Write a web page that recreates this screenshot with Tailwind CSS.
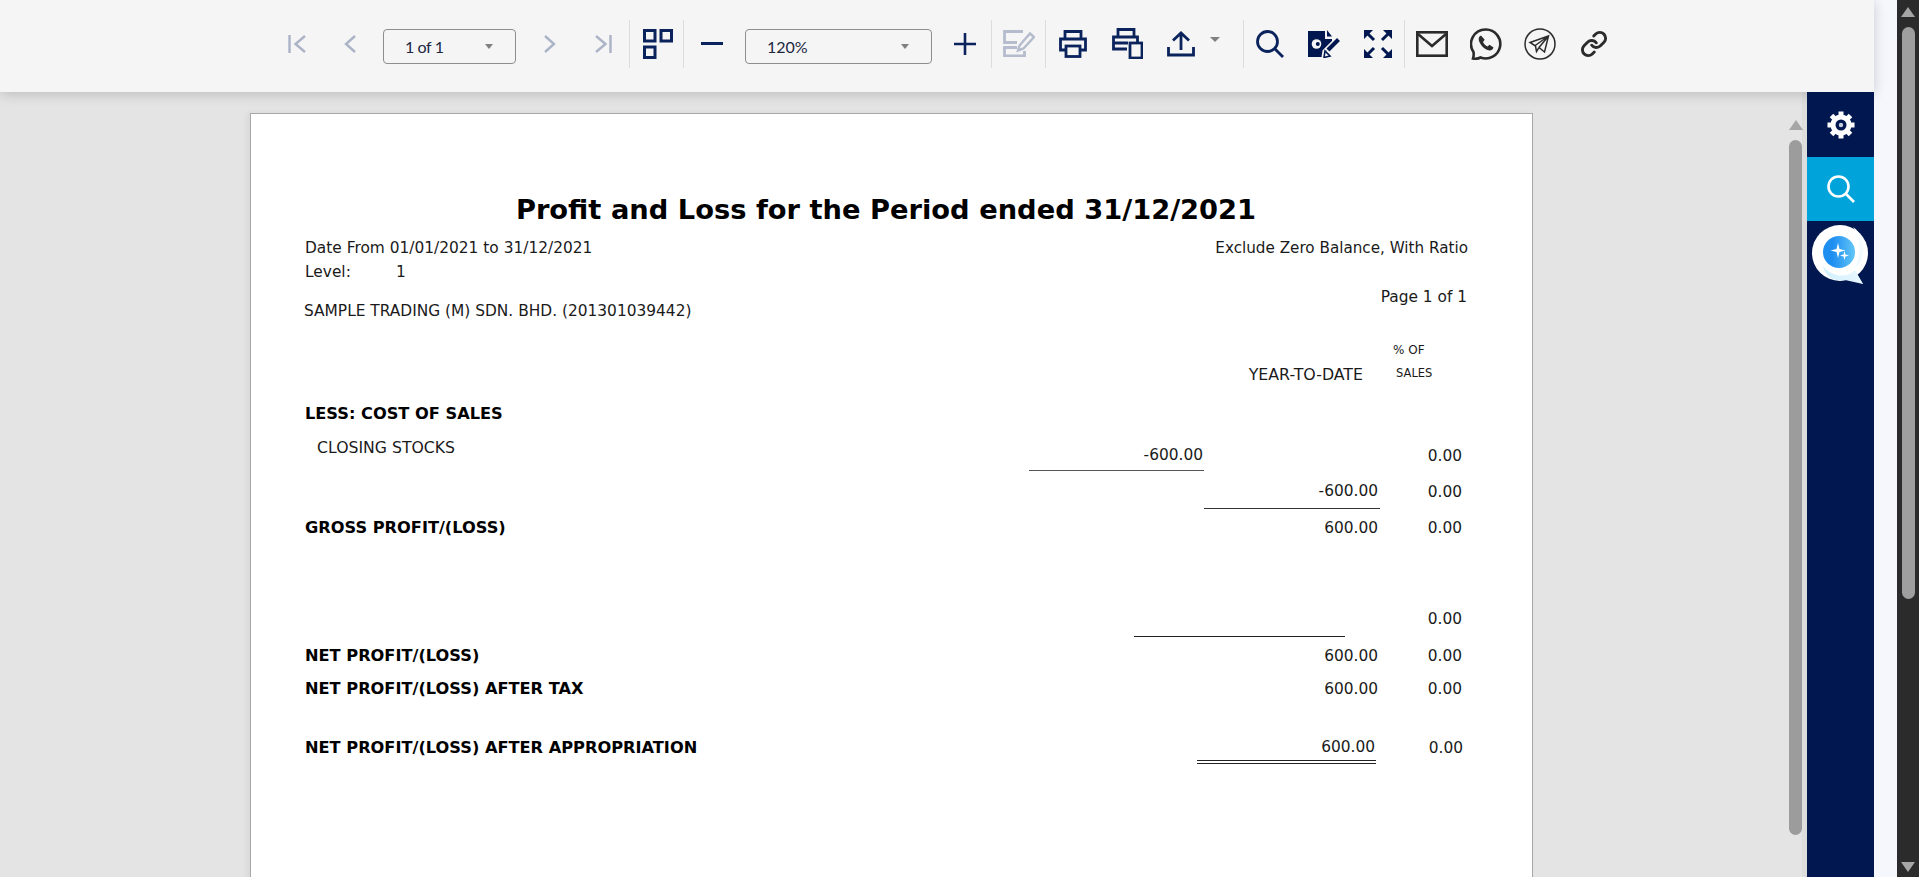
<!DOCTYPE html>
<html>
<head>
<meta charset="utf-8">
<script src="https://cdn.jsdelivr.net/npm/@tailwindcss/browser@4"></script>
<title>Profit and Loss</title>
</head>
<body class="m-0 overflow-hidden">
<div class="flex h-[877px] w-[1919px] overflow-hidden bg-[#f5f7fc]">
  <div class="flex h-full w-[1874px] flex-col">
    <!-- toolbar -->
    <div class="relative z-10 flex h-[92px] shrink-0 items-center bg-[#f5f5f5] pb-[5px] pl-[288px] shadow-[0_2px_12px_rgba(0,0,0,0.18)] font-['Lato',sans-serif]">
      <svg class="shrink-0" width="18" height="20" viewBox="0 0 18 20" fill="none" stroke="#abb3c7" stroke-width="2.4"><path d="M1.5 1v18M17 2L7.5 10l9.500 8"/></svg>
      <svg class="ml-[38px] shrink-0" width="12" height="20" viewBox="0 0 12 20" fill="none" stroke="#abb3c7" stroke-width="2.400"><path d="M11 2L2 10l9 8"/></svg>
      <div class="relative ml-[27px] mt-[5px] h-[35px] w-[133px] shrink-0 rounded-[4px] border border-[#8e8e8e] pl-[21px] pt-[4px] text-[16px] leading-[26px] tracking-[-0.4px] text-[#1c2740]">1 of 1<span class="absolute left-[101px] top-[14px] h-0 w-0 border-x-[4.500px] border-t-[5px] border-x-transparent border-t-[#808080]"></span></div>
      <svg class="ml-[28px] shrink-0" width="12" height="20" viewBox="0 0 12 20" fill="none" stroke="#abb3c7" stroke-width="2.400"><path d="M1 2l9 8-9 8"/></svg>
      <svg class="ml-[39px] shrink-0" width="17" height="20" viewBox="0 0 17 20" fill="none" stroke="#abb3c7" stroke-width="2.400"><path d="M15.500 1v18M1 2l9.500 8L1 18"/></svg>
      <div class="ml-[17px] h-[48px] w-px shrink-0 bg-[#dcdcdc]"></div>
      <svg class="ml-[13px] shrink-0" width="30" height="30" viewBox="0 0 30 30" fill="none" stroke="#0b235c" stroke-width="3"><rect x="1.500" y="1.500" width="10.500" height="10.500"/><rect x="18" y="1.500" width="10.500" height="10.500"/><rect x="1.500" y="18" width="10.500" height="10.500"/></svg>
      <div class="ml-[10px] h-[48px] w-px shrink-0 bg-[#dcdcdc]"></div>
      <div class="ml-[17px] h-[3px] w-[22px] shrink-0 bg-[#0b235c]"></div>
      <div class="relative ml-[22px] mt-[5px] h-[35px] w-[187px] shrink-0 rounded-[4px] border border-[#8e8e8e] pl-[21px] pt-[4px] text-[16px] leading-[26px] text-[#1c2740]">120%<span class="absolute left-[155px] top-[14px] h-0 w-0 border-x-[4.500px] border-t-[5px] border-x-transparent border-t-[#808080]"></span></div>
      <svg class="ml-[22px] shrink-0" width="22" height="22" viewBox="0 0 22 22" fill="none" stroke="#0b235c" stroke-width="2.600"><path d="M0 11h22M11 0v22"/></svg>
      <div class="ml-[15px] h-[48px] w-px shrink-0 bg-[#dcdcdc]"></div>
      <svg class="ml-[11px] shrink-0" width="32" height="27" viewBox="0 0 32 27" fill="none" stroke="#b4bccd" stroke-width="2.800"><path d="M20 1.500H1.500v11H14M14 17.500H1.500v8.500h20v-5"/><path d="M15 20.500l1.500-5L27 3.500l4 3.500-10.500 11.500z" stroke-width="2.400"/></svg>
      <div class="ml-[10px] h-[48px] w-px shrink-0 bg-[#dcdcdc]"></div>
      <svg class="ml-[13px] shrink-0" width="28" height="28" viewBox="0 0 28 28" fill="none" stroke="#0b235c" stroke-width="2.800"><path d="M6 9V1.500h16V9M6 20H1.500V9h25v11H22"/><rect x="7" y="16" width="14" height="10.500"/></svg>
      <svg class="ml-[25px] shrink-0" width="31" height="31" viewBox="0 0 31 31" fill="none" stroke="#0b235c" stroke-width="2.800"><path d="M6 9V1.500h16V9M15 21H1.500V9h24v6M2 15h14"/><rect x="18" y="15" width="12" height="15" fill="#f5f5f5"/></svg>
      <svg class="ml-[24px] shrink-0" width="28" height="26" viewBox="0 0 28 26" fill="none" stroke="#0b235c" stroke-width="2.800"><path d="M14 19V2M6 9.500L14 2l8 7.500M1.500 16v8h25v-8"/></svg>
      <span class="ml-[15px] mb-[9px] h-0 w-0 shrink-0 border-x-[5px] border-t-[5px] border-x-transparent border-t-[#808080]"></span>
      <div class="ml-[23px] h-[48px] w-px shrink-0 bg-[#dcdcdc]"></div>
      <svg class="ml-[12px] shrink-0" width="28" height="28" viewBox="0 0 28 28" fill="none" stroke="#0b235c" stroke-width="2.800"><circle cx="11.500" cy="11.500" r="10"/><path d="M18.500 18.500L27 27"/></svg>
      <svg class="ml-[24px] shrink-0" width="32" height="28" viewBox="0 0 32 28"><path d="M0 1h17v8h7v6L15 24v3H0z" fill="#00174f"/><path d="M19 0l5 6.500h-5z" fill="#00174f"/><circle cx="8.500" cy="14" r="4.800" fill="#f5f5f5"/><circle cx="9.800" cy="14" r="2" fill="#00174f"/><path d="M15 27l1-6 11-11" fill="none" stroke="#f5f5f5" stroke-width="3"/><path d="M30.500 9.500L20 20" fill="none" stroke="#00174f" stroke-width="4"/><path d="M16 27.500l1-6.500 5 5z" fill="none" stroke="#00174f" stroke-width="1.600"/></svg>
      <svg class="ml-[24px] shrink-0" width="28" height="28" viewBox="0 0 28 28" fill="#00174f" stroke="#00174f" stroke-width="0"><path d="M0 0h9L0 9zM28 0v9L19 0zM0 28v-9l9 9zM28 28h-9l9-9z"/><path d="M3 3l7 7M25 3l-7 7M3 25l7-7M25 25l-7-7" fill="none" stroke-width="3"/></svg>
      <div class="ml-[12px] h-[48px] w-px shrink-0 bg-[#dcdcdc]"></div>
      <svg class="ml-[11px] shrink-0" width="32" height="26" viewBox="0 0 32 26" fill="none" stroke="#2b2b2b" stroke-width="2.600"><rect x="1.300" y="1.300" width="29.400" height="23.400"/><path d="M2 3l14 12L30 3"/></svg>
      <svg class="ml-[22px] shrink-0" width="32" height="32" viewBox="0 0 32 32" fill="none" stroke="#2b2b2b" stroke-width="2.600"><path d="M16 1.500A14.500 14.500 0 1 1 10.500 29.500C8.500 30.500 5.500 31 3 30.500C3.500 29 4 27 3.500 24A14.500 14.500 0 0 1 16 1.500z"/><path d="M11 7.500c-2.500 1-3 3.500-1.500 6.800 1.700 3.700 4.500 6.300 8 7.700 3 1 5.200 0 6-2.500l-4-2.800-2 1.800c-2-1-3.500-2.500-4.500-4.500l1.700-2.200z" fill="#2b2b2b" stroke="none"/></svg>
      <svg class="ml-[22px] shrink-0" width="32" height="32" viewBox="0 0 32 32" fill="none" stroke="#2b2b2b" stroke-width="1.500"><circle cx="16" cy="16" r="15"/><path d="M6 14.500l18.500-6.500-4 16-5.500-4.500-2.500 4-1-5.500zM10.500 18L24.500 8 15 19.500"/></svg>
      <svg class="ml-[24px] shrink-0" width="28" height="28" viewBox="0 0 24 24" fill="none" stroke="#2b2b2b" stroke-width="2.500" stroke-linecap="round" stroke-linejoin="round"><path d="M10 13a5 5 0 0 0 7.540.54l3-3a5 5 0 0 0-7.070-7.070l-1.720 1.710"/><path d="M14 11a5 5 0 0 0-7.540-.54l-3 3a5 5 0 0 0 7.070 7.070l1.710-1.710"/></svg>
    </div>

    <div class="flex min-h-0 flex-1">
      <!-- viewer -->
      <div class="flex min-w-0 flex-1 bg-[#e4e4e4]">
        <div class="w-[1789px] shrink-0 pl-[250px] pt-[21px]">
          <!-- paper -->
          <div class="h-[900px] w-[1283px] border border-[#a8a8a8] bg-white pl-[54px] pt-[76px] text-[15.4px] leading-[24px] text-[#1a1a1a] shadow-[-3px_0_6px_rgba(0,0,0,0.06)] font-['DejaVu_Sans',sans-serif]">
            <div class="h-[38px] w-[1162px] pt-[1px] text-center text-[27.3px] font-bold leading-[38px] text-black">Profit and Loss for the Period ended 31/12/2021</div>
            <div class="mt-[7px] flex h-[25px] w-[1163px] justify-between pt-[1px]"><span>Date From 01/01/2021 to 31/12/2021</span><span class="text-[15.2px]">Exclude Zero Balance, With Ratio</span></div>
            <div class="flex"><span class="w-[91px]">Level:</span><span>1</span></div>
            <div class="-mt-[1px] flex h-[40px] w-[1162px] justify-between"><span class="-ml-[1px] self-end">SAMPLE TRADING (M) SDN. BHD. (201301039442)</span><span class="mt-[2px] self-start">Page 1 of 1</span></div>
            <!-- column heads -->
            <div class="mt-[13px] flex h-[48px]">
              <div class="ml-[942px] w-[116px] self-end whitespace-nowrap pt-[2px] text-right text-[15.800px] leading-[24px]"><span class="relative top-[3px]">YEAR-TO-DATE</span></div>
              <div class="ml-[30px] flex flex-col pt-[2px] text-[12px]"><span class="h-[23px]">% OF</span><span class="ml-[3px] h-[22px] text-[11.500px]">SALES</span></div>
            </div>
            <div class="mt-[18px] text-[16.200px] font-bold text-black">LESS: COST OF SALES</div>
            <!-- closing stocks -->
            <div class="mt-[9px] flex h-[36px]">
              <div class="w-[724px] self-start pl-[12px] pt-[1px] text-[15.700px]">CLOSING STOCKS</div>
              <div class="h-[28px] w-[175px] self-end border-b border-[#555] pr-[1px] text-right">-600.00</div>
              <div class="w-[176px]"></div>
              <div class="w-[82px] self-end pb-[3px] text-right">0.00</div>
            </div>
            <div class="flex h-[38px]">
              <div class="w-[899px]"></div>
              <div class="w-[176px] border-b border-[#333] pr-[2px] pt-[8px] text-right">-600.00</div>
              <div class="w-[82px] pt-[9px] text-right">0.00</div>
            </div>
            <div class="flex h-[36px] items-center pt-[2px]">
              <div class="w-[899px] text-[16.200px] font-bold text-black">GROSS PROFIT/(LOSS)</div>
              <div class="w-[176px] pr-[2px] text-right">600.00</div>
              <div class="w-[82px] text-right">0.00</div>
            </div>
            <!-- spacer row -->
            <div class="mt-[61px] flex h-[31px]">
              <div class="ml-[829px] h-full w-[211px] border-b border-[#222]"></div>
              <div class="ml-[35px] w-[82px] pt-[1px] text-right">0.00</div>
            </div>
            <div class="mt-[7px] flex"><span class="w-[899px] text-[16.200px] font-bold text-black">NET PROFIT/(LOSS)</span><span class="w-[176px] pr-[2px] text-right">600.00</span><span class="w-[82px] text-right">0.00</span></div>
            <div class="mt-[9px] flex"><span class="w-[899px] text-[16.200px] font-bold text-black">NET PROFIT/(LOSS) AFTER TAX</span><span class="w-[176px] pr-[2px] text-right">600.00</span><span class="w-[82px] text-right">0.00</span></div>
            <div class="mt-[34px] flex h-[29px]">
              <div class="w-[892px] pt-[1px] text-[16.200px] font-bold text-black">NET PROFIT/(LOSS) AFTER APPROPRIATION</div>
              <div class="h-[29px] w-[179px] border-b-[4px] border-double border-[#222] pr-[1px] text-right">600.00</div>
              <div class="w-[87px] pt-[1px] text-right">0.00</div>
            </div>
          </div>
        </div>
        <!-- inner scrollbar -->
        <div class="relative w-[13px] shrink-0">
          <span class="absolute left-0 top-[28px] h-0 w-0 border-x-[7px] border-b-[10px] border-x-transparent border-b-[#a6a6a6]"></span>
          <div class="mt-[48px] h-[695px] w-[13px] rounded-full bg-[#9c9c9c]"></div>
        </div>
        <div class="w-[5px] shrink-0 bg-[#dddddd]"></div>
      </div>
      <!-- sidebar -->
      <div class="relative z-20 flex w-[67px] shrink-0 flex-col items-center bg-[#00174f]">
        <div class="flex h-[65px] w-full items-center justify-center">
          <svg width="28" height="28" viewBox="0 0 28 28" fill="#fff"><circle cx="14" cy="14" r="10.500"/><g stroke="#fff" stroke-width="5"><path d="M14 0.500v27M0.500 14h27M4.500 4.500l19 19M23.500 4.500l-19 19"/></g><circle cx="14" cy="14" r="5.500" fill="#00174f"/><circle cx="14" cy="14" r="2.200" fill="#c7cfdf"/></svg>
        </div>
        <div class="flex h-[64px] w-full items-center justify-center bg-[#00a3da]">
          <svg width="28" height="28" viewBox="0 0 28 28" fill="none" stroke="#fff" stroke-width="2.600"><circle cx="11.500" cy="11.500" r="10"/><path d="M18.500 18.500L27 27"/></svg>
        </div>
        <svg class="ml-[-2px] mt-[3px]" width="58" height="62" viewBox="0 0 58 62">
          <defs><linearGradient id="b" x1="0" x2="1" y1="0" y2="0"><stop offset="0.3" stop-color="#1f8ef1"/><stop offset="1" stop-color="#62c6f6"/></linearGradient>
          <linearGradient id="w" x1="0" x2="1" y1="1" y2="0"><stop offset="0" stop-color="#cdeefe"/><stop offset="1" stop-color="#ffffff"/></linearGradient></defs>
          <circle cx="29" cy="29" r="28" fill="#fff"/>
          <path d="M34 50L52 60 42 44z" fill="#fff"/>
          <path d="M12 42C22 54 36 54 44 46L52 60 34 56C22 58 14 52 12 42zM42 3C50 14 50 34 44 44 54 36 58 14 42 3z" fill="url(#w)"/>
          <circle cx="28" cy="28" r="16" fill="url(#b)"/>
          <path d="M27 19l1.500 6 6 1.500-6 1.500-1.500 6-1.500-6-6-1.500 6-1.500zM33.500 27l1 3.500 3.500 1-3.500 1-1 3.500-1-3.500-3.500-1 3.500-1z" fill="#fff"/>
        </svg>
      </div>
    </div>
  </div>
  <!-- white strip -->
  <div class="w-[23px] shrink-0 bg-[#f5f7fc]"></div>
  <!-- page scrollbar -->
  <div class="relative w-[22px] shrink-0 bg-[#2b2b2b]">
    <span class="absolute left-[4px] top-[7px] h-0 w-0 border-x-[7px] border-b-[10px] border-x-transparent border-b-[#a6a6a6]"></span>
    <div class="ml-[5px] mt-[27px] h-[572px] w-[13px] rounded-full bg-[#9f9f9f]"></div>
    <span class="absolute bottom-[5px] left-[4px] h-0 w-0 border-x-[7px] border-t-[10px] border-x-transparent border-t-[#a6a6a6]"></span>
  </div>
</div>
</body>
</html>
